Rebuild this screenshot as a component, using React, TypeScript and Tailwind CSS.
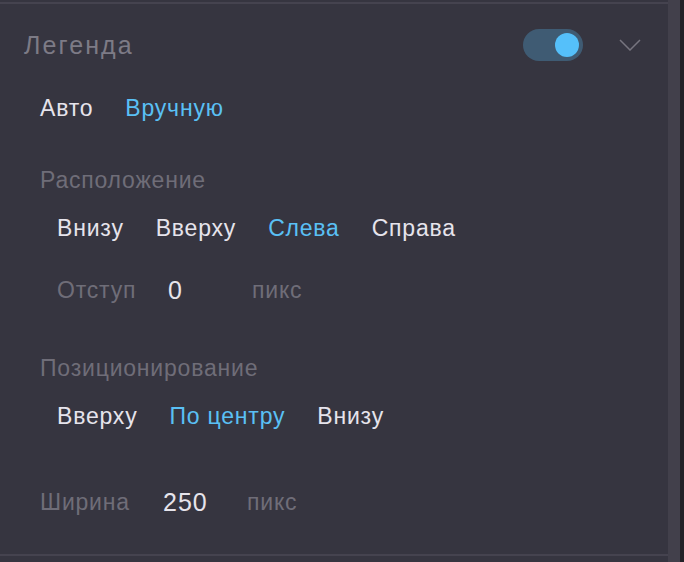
import React from "react";

const font = { fontFamily: '"Liberation Sans", Arial, sans-serif' };

function Opt({ label, active }: { label: string; active?: boolean }) {
  return (
    <span className={active ? "text-[#5ac0f5]" : "text-[#e6e4ec]"}>{label}</span>
  );
}

export default function App() {
  return (
    <div className="flex h-[562px] w-[684px] bg-[#222127]" style={font}>
      <div className="flex w-[668px] flex-col bg-[#363540]">
        <div className="h-[2px]" />
        <div className="h-[2px] bg-[#45434f]" />
        <div className="flex flex-1 flex-col px-6 text-[23px] leading-[28px] tracking-[0.8px]">
          <div className="flex h-[78px] items-center pt-1">
            <span className="text-[25px] tracking-[2.1px] text-[#7d7b86]">Легенда</span>
            <div className="ml-auto flex h-8 w-[60px] items-center justify-end rounded-full bg-[#3f5b73] pr-1">
              <div className="h-6 w-6 rounded-full bg-[#55c0fa]" />
            </div>
            <svg className="ml-[36px] mr-[3px]" width="22" height="12" viewBox="0 0 22 12" fill="none">
              <path d="M1 1l10 10L21 1" stroke="#77757f" strokeWidth="1.5" />
            </svg>
          </div>

          <div className="mt-[12px] flex gap-8 pl-4">
            <Opt label="Авто" />
            <Opt label="Вручную" active />
          </div>

          <div className="mt-[44px] pl-4 text-[#6f6d78]">Расположение</div>
          <div className="mt-[20px] flex gap-8 pl-[33px]">
            <Opt label="Внизу" />
            <Opt label="Вверху" />
            <Opt label="Слева" active />
            <Opt label="Справа" />
          </div>
          <div className="mt-[34px] flex items-center pl-[33px]">
            <span className="w-[111px] text-[#6f6d78]">Отступ</span>
            <span className="w-[84px] text-[25px] tracking-[1px] text-[#e6e4ec]">0</span>
            <span className="text-[#6f6d78]">пикс</span>
          </div>

          <div className="mt-[50px] pl-4 text-[#6f6d78]">Позиционирование</div>
          <div className="mt-[20px] flex gap-8 pl-[33px]">
            <Opt label="Вверху" />
            <Opt label="По центру" active />
            <Opt label="Внизу" />
          </div>

          <div className="mt-[58px] flex items-center pl-4">
            <span className="w-[123px] text-[#6f6d78]">Ширина</span>
            <span className="w-[84px] text-[25px] tracking-[1px] text-[#e6e4ec]">250</span>
            <span className="text-[#6f6d78]">пикс</span>
          </div>
        </div>
        <div className="h-[2px] bg-[#45434f]" />
        <div className="h-[6px]" />
      </div>
      <div className="w-[12px] bg-[#42404b]" />
    </div>
  );
}
